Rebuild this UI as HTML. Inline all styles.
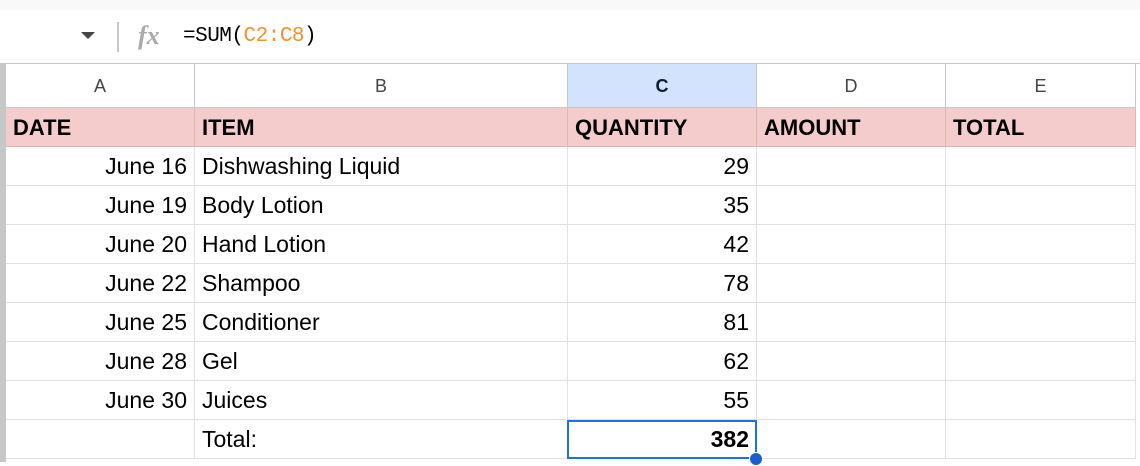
<!DOCTYPE html>
<html><head><style>
body{margin:0;width:1140px;height:462px;overflow:hidden;background:#fff;font-family:"Liberation Sans",sans-serif;position:relative}
.a{position:absolute;box-sizing:border-box}
.top{left:0;top:0;width:1140px;height:10px;background:#f8f9fa}
.fb{left:0;top:10px;width:1140px;height:54px;background:#fff;border-bottom:1px solid #c7c7c7}
.hdr{top:64px;height:44px;background:#fff;border-right:1px solid #c7c7c7;border-bottom:1px solid #c7c7c7;font-size:18px;color:#444;text-align:center;line-height:44px}
.c{border-right:1px solid #e1e1e1;border-bottom:1px solid #e1e1e1;height:39px;line-height:39px;font-size:23px;padding:0 7px;white-space:nowrap;color:#000}
.h{background:#f4cccc;font-weight:bold;font-size:22px;border-color:#dab6b6}
.r{text-align:right}
</style></head><body>
<div class="a top"></div>
<div class="a fb">
 <div class="a" style="left:81px;top:22px;width:0;height:0;border-left:7px solid transparent;border-right:7px solid transparent;border-top:7px solid #444"></div>
 <div class="a" style="left:117px;top:12px;width:2px;height:30px;background:#c7c7c7"></div>
 <div class="a" style="left:138px;top:11px;font:italic bold 26px 'Liberation Serif',serif;color:#aaa">fx</div>
 <div class="a" style="left:183px;top:15px;font:21px 'Liberation Mono',monospace;color:#000;letter-spacing:-0.5px">=SUM(<span style="color:#f4902c">C2:C8</span>)</div>
</div>
<div class="a" style="left:0;top:64px;width:6px;height:398px;background:#c7c7c7"></div>
<div class="a hdr" style="left:6px;width:189px">A</div>
<div class="a hdr" style="left:195px;width:373px">B</div>
<div class="a hdr" style="left:568px;width:189px;background:#d3e3fd;color:#0b1b3a;font-weight:bold">C</div>
<div class="a hdr" style="left:757px;width:189px">D</div>
<div class="a hdr" style="left:946px;width:190px">E</div>
<div id="g"></div>
<script>
var cols=[6,195,568,757,946,1136];
var rows=[["DATE","ITEM","QUANTITY","AMOUNT","TOTAL"],["June 16","Dishwashing Liquid","29"],["June 19","Body Lotion","35"],["June 20","Hand Lotion","42"],["June 22","Shampoo","78"],["June 25","Conditioner","81"],["June 28","Gel","62"],["June 30","Juices","55"],["","Total:","382"]];
var h="";
rows.forEach(function(r,i){var y=108+i*39;for(var j=0;j<5;j++){var t=r[j]||"";var cls="a c"+(i==0?" h":"")+(i>0&&(j==0||j==2)?" r":"");var st="";if(i==8&&j==2)st="font-weight:bold;";h+='<div class="'+cls+'" style="left:'+cols[j]+'px;top:'+y+'px;width:'+(cols[j+1]-cols[j])+'px;'+st+'">'+t+'</div>';}});
h+='<div class="a" style="left:567px;top:420px;width:190px;height:39px;border:2px solid #1a73e8"></div>';
h+='<div class="a" style="left:749px;top:452px;width:14px;height:14px;border-radius:50%;background:#1a5fd0;border:1px solid #fff"></div>';
document.getElementById("g").innerHTML=h;
</script>
</body></html>
